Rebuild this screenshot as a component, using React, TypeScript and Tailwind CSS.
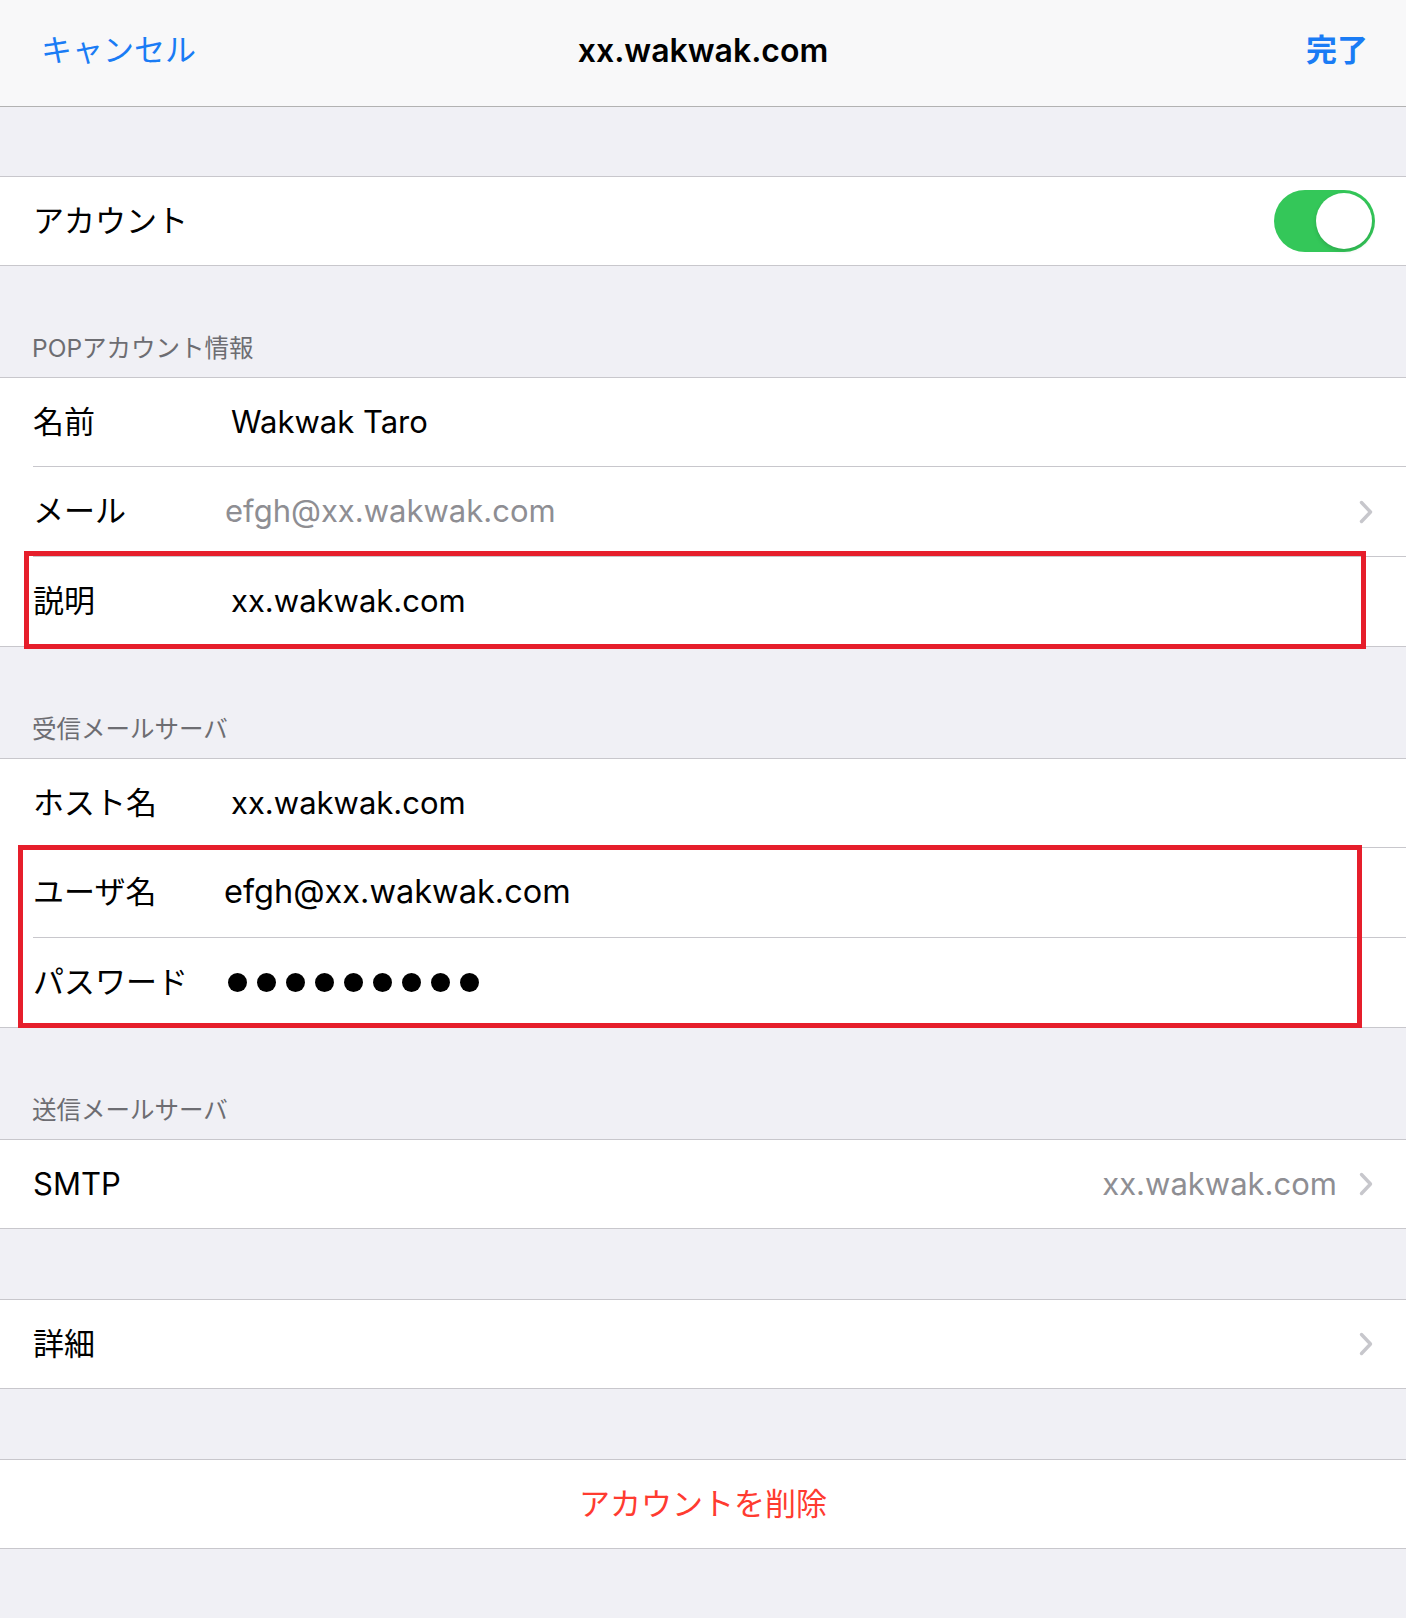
import * as React from "react";

const FONT = "font-['Inter','Noto_Sans_CJK_JP',sans-serif]";

function Chevron() {
  return (
    <svg width="14" height="24" viewBox="0 0 14 24" className="shrink-0">
      <path d="M2.5 2.5 L11.5 12 L2.5 21.5" fill="none" stroke="#c7c7cc" strokeWidth="3.4" strokeLinecap="round" strokeLinejoin="round" />
    </svg>
  );
}

function Toggle() {
  return (
    <div className="flex h-[62px] w-[101px] items-center justify-end rounded-full bg-[#34c759] p-[3px]">
      <div className="h-[56px] w-[56px] rounded-full bg-white shadow-[0_2px_4px_rgba(0,0,0,0.15)]" />
    </div>
  );
}

function Header({ children }: { children: React.ReactNode }) {
  return (
    <div className="flex h-[111px] items-end pb-[17px] pl-[32px] text-[24.5px] leading-[24px] text-[#6d6d72]">
      {children}
    </div>
  );
}

function Row({
  label,
  value,
  valueX = 231,
  muted = false,
  chevron = false,
  first = false,
  valueClass = "",
}: {
  label: string;
  value?: React.ReactNode;
  valueX?: number;
  muted?: boolean;
  chevron?: boolean;
  first?: boolean;
  valueClass?: string;
}) {
  return (
    <div className="pl-[33px]">
      <div
        className={`flex items-center pr-[33px] ${first ? "h-[88px]" : "h-[90px] border-t border-[#c8c7cc]"}`}
      >
        <div className="shrink-0" style={{ width: valueX - 33 }}>
          {label}
        </div>
        <div className={`flex-1 ${muted ? "text-[#8e8e93]" : "text-black"} ${valueClass}`}>{value}</div>
        {chevron && <Chevron />}
      </div>
    </div>
  );
}

function Dots() {
  return (
    <div className="flex items-center gap-[10px]">
      {Array.from({ length: 9 }).map((_, i) => (
        <span key={i} className="block h-[19px] w-[19px] rounded-full bg-black" />
      ))}
    </div>
  );
}

export default function App() {
  return (
    <div className={`min-h-[1618px] w-[1406px] bg-[#f0f0f5] text-[31px] text-black ${FONT}`}>
      {/* nav bar */}
      <div className="relative flex h-[107px] items-start border-b border-[#b2b2b2] bg-[#f8f8f9] pt-[27px]">
        <div className="pl-[41px] text-[#1a7cf5]">キャンセル</div>
        <div className="absolute left-0 right-0 top-[27px] text-center text-[32px] font-semibold">xx.wakwak.com</div>
        <div className="ml-auto pr-[38px] font-bold text-[#1a7cf5]">完了</div>
      </div>

      <div className="h-[69px]" />

      {/* account toggle */}
      <div className="flex h-[90px] items-center border-y border-[#c8c7cc] bg-white pl-[33px] pr-[31px]">
        <div className="flex-1">アカウント</div>
        <Toggle />
      </div>

      <Header>POPアカウント情報</Header>
      <div className="border-y border-[#c8c7cc] bg-white">
        <Row first label="名前" value="Wakwak Taro" />
        <Row label="メール" value="efgh@xx.wakwak.com" valueX={225} muted chevron />
        <div className="relative">
          <Row label="説明" value="xx.wakwak.com" />
          <div className="pointer-events-none absolute left-[24px] right-[40px] top-[-5px] bottom-[-3px] border-[5px] border-[#e61e2b]" />
        </div>
      </div>

      <Header>受信メールサーバ</Header>
      <div className="border-y border-[#c8c7cc] bg-white">
        <Row first label="ホスト名" value="xx.wakwak.com" />
        <div className="relative">
          <Row label="ユーザ名" value="efgh@xx.wakwak.com" valueX={224} valueClass="text-[32.5px]" />
          <Row label="パスワード" value={<Dots />} valueX={228} />
          <div className="pointer-events-none absolute left-[18px] right-[44px] top-[-2px] bottom-[-1px] border-[5px] border-[#e61e2b]" />
        </div>
      </div>

      <Header>送信メールサーバ</Header>
      <div className="flex h-[90px] items-center border-y border-[#c8c7cc] bg-white pl-[33px] pr-[33px]">
        <div className="flex-1">SMTP</div>
        <div className="mr-[22px] text-[#8e8e93]">xx.wakwak.com</div>
        <Chevron />
      </div>

      <div className="h-[70px]" />
      <div className="flex h-[90px] items-center border-y border-[#c8c7cc] bg-white pl-[33px] pr-[33px]">
        <div className="flex-1">詳細</div>
        <Chevron />
      </div>

      <div className="h-[70px]" />
      <div className="flex h-[90px] items-center justify-center border-y border-[#c8c7cc] bg-white text-[#ff3b30]">
        アカウントを削除
      </div>
    </div>
  );
}
